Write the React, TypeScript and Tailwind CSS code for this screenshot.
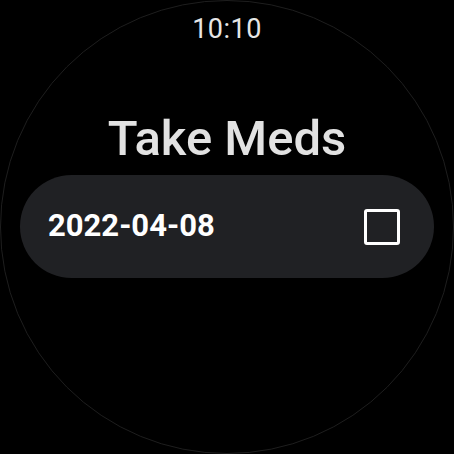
export default function App() {
  return (
    <div className="relative h-[454px] w-[454px] overflow-hidden bg-black" style={{ fontFamily: "Roboto, 'Noto Sans', sans-serif" }}>
      <div className="pointer-events-none absolute inset-0 rounded-full border border-[#1e1e1e]" />
      <div className="flex h-full flex-col items-center">
        <div className="mt-[14px] text-[27px] leading-[30px] tracking-[0.5px] text-[#e6e6e6]">10:10</div>
        <div className="mt-[68px] text-[49px] font-medium leading-[54px] text-[#e2e2e2]">Take Meds</div>
        <div className="mt-[9px] flex h-[103px] w-[414px] items-center justify-between rounded-full bg-[#202124] pl-[28px] pr-[34px]">
          <span className="text-[31px] font-bold text-white">2022-04-08</span>
          <span className="h-[36px] w-[36px] rounded-[3px] border-[3px] border-white" />
        </div>
      </div>
    </div>
  );
}
